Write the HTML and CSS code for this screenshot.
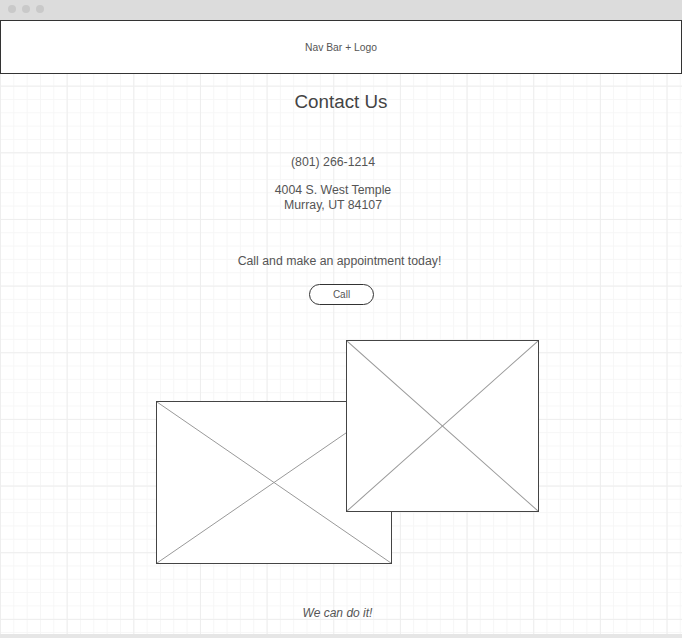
FILE: index.html
```html
<!DOCTYPE html>
<html lang="en">
<head>
  <meta charset="UTF-8">
  <title>Contact Us</title>
  <link rel="stylesheet" href="styles.css">
</head>
<body>

<div class="browser-bar">
  <span class="dot"></span>
  <span class="dot"></span>
  <span class="dot"></span>
</div>

<div class="canvas">
  <div class="nav">Nav Bar + Logo</div>

  <h2 class="title">Contact Us</h2>

  <p class="phone">(801) 266-1214</p>
  <p class="address">4004 S. West Temple<br>Murray, UT 84107</p>

  <p class="cta">Call and make an appointment today!</p>
  <div class="btn-row"><span class="btn">Call</span></div>

  <div class="images">
    <div class="placeholder wide">
      <svg viewBox="0 0 100 100" preserveAspectRatio="none">
        <line x1="0" y1="0" x2="100" y2="100" vector-effect="non-scaling-stroke"/>
        <line x1="100" y1="0" x2="0" y2="100" vector-effect="non-scaling-stroke"/>
      </svg>
    </div>
    <div class="placeholder tall">
      <svg viewBox="0 0 100 100" preserveAspectRatio="none">
        <line x1="0" y1="0" x2="100" y2="100" vector-effect="non-scaling-stroke"/>
        <line x1="100" y1="0" x2="0" y2="100" vector-effect="non-scaling-stroke"/>
      </svg>
    </div>
  </div>

  <p class="slogan">We can do it!</p>
</div>

<div class="bottom-bar"></div>

</body>
</html>
```

FILE: styles.css
```css
body {
  margin: 0;
  font-family: "Liberation Sans", Arial, sans-serif;
  color: #4a4a4a;
  background: #fff;
}
.browser-bar {
  height: 20px;
  background: #dcdcdc;
  display: flex;
  align-items: center;
  gap: 6px;
  padding-left: 8px;
  box-sizing: border-box;
}
.dot {
  width: 8px;
  height: 8px;
  border-radius: 50%;
  background: #c9c9c9;
  margin-top: -2px;
}
.canvas {
  height: 614px;
  overflow: hidden;
  background-color: #fff;
  background-image:
    linear-gradient(to right, #eeeeee 1px, transparent 1px),
    linear-gradient(to bottom, #eeeeee 1px, transparent 1px),
    linear-gradient(to right, #f6f6f6 1px, transparent 1px),
    linear-gradient(to bottom, #f6f6f6 1px, transparent 1px);
  background-size: 66.667px 66.667px, 66.667px 66.667px, 13.333px 13.333px, 13.333px 13.333px;
  background-position: 0 -1px;
}
.nav {
  height: 54px;
  box-sizing: border-box;
  border: 1px solid #333;
  background: #fff;
  display: flex;
  align-items: center;
  justify-content: center;
  font-size: 10.3px;
  color: #555;
}
.title {
  margin: 17px 0 0;
  font-weight: normal;
  font-size: 18.8px;
  line-height: 22px;
  text-align: center;
  color: #444;
}
.phone, .address, .cta {
  margin: 0;
  font-size: 12.3px;
  line-height: 15px;
  text-align: center;
  color: #555;
}
.phone {
  margin-top: 42px;
  padding-right: 16px;
}
.address {
  margin-top: 13px;
  padding-right: 16px;
}
.cta {
  margin-top: 41px;
  padding-right: 3px;
}
.btn-row {
  display: flex;
  justify-content: center;
  margin-top: 15px;
  padding-left: 1px;
}
.btn {
  width: 65px;
  height: 21px;
  box-sizing: border-box;
  border: 1px solid #333;
  border-radius: 11px;
  background: #fff;
  font-size: 10px;
  line-height: 19px;
  text-align: center;
  color: #555;
}
.images {
  display: flex;
  align-items: flex-start;
  margin-top: 35px;
  padding-left: 156px;
}
.placeholder {
  box-sizing: border-box;
  border: 1px solid #444;
  background: #fff;
}
.placeholder svg {
  display: block;
  width: 100%;
  height: 100%;
}
.placeholder line {
  stroke: #999;
  stroke-width: 1;
}
.wide {
  width: 236px;
  height: 163px;
  margin-top: 61px;
}
.tall {
  width: 193px;
  height: 172px;
  margin-left: -46px;
}
.slogan {
  margin: 42px 0 0;
  padding-right: 7px;
  font-size: 12px;
  line-height: 15px;
  font-style: italic;
  text-align: center;
  color: #555;
}
.bottom-bar {
  height: 4px;
  background: #e6e6e6;
}
```
